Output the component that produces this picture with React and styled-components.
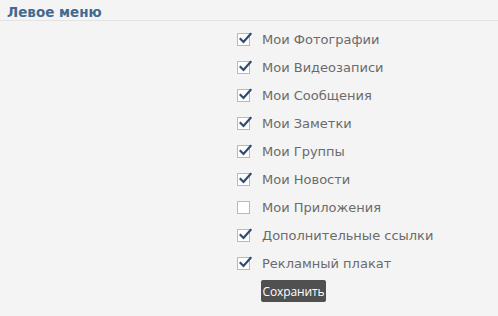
import React from "react";
import styled, { createGlobalStyle } from "styled-components";

const Global = createGlobalStyle`
  html, body { margin: 0; padding: 0; background: #f4f4f4; }
  body { font-family: "DejaVu Sans", sans-serif; }
`;

const Page = styled.div`
  width: 498px;
  height: 316px;
  background: #f4f4f4;
`;

const Header = styled.div`
  height: 21px;
  box-sizing: border-box;
  padding: 5px 0 0 7px;
  border-bottom: 1px solid #e3e3e3;
  font-family: "DejaVu Sans", sans-serif;
  font-weight: bold;
  font-size: 13.5px;
  color: #45688e;
  line-height: 15px;
`;

const List = styled.div`
  display: flex;
  flex-direction: column;
  padding: 4px 0 0 237px;
`;

const Row = styled.label`
  display: flex;
  align-items: center;
  height: 28px;
`;

const Box = styled.span`
  position: relative;
  width: 13px;
  height: 13px;
  box-sizing: border-box;
  border: 1px solid #b9b9b9;
  background: #fff;
  flex: none;
`;

const Check = styled.svg`
  position: absolute;
  left: 1px;
  top: -2px;
`;

const Label = styled.span`
  margin-left: 12px;
  font-family: "DejaVu Sans", sans-serif;
  font-size: 13px;
  color: #6b6b6b;
  line-height: 15px;
`;

const Button = styled.button`
  margin: 3px 0 0 24px;
  align-self: flex-start;
  width: 65px;
  height: 22px;
  border: none;
  border-radius: 2px;
  background: #505050;
  color: #fff;
  font-family: "Open Sans", sans-serif;
  font-size: 12px;
  letter-spacing: -0.1px;
  padding: 0;
`;

const items = [
  ["Мои Фотографии", true],
  ["Мои Видеозаписи", true],
  ["Мои Сообщения", true],
  ["Мои Заметки", true],
  ["Мои Группы", true],
  ["Мои Новости", true],
  ["Мои Приложения", false],
  ["Дополнительные ссылки", true],
  ["Рекламный плакат", true],
];

function CheckMark() {
  return (
    <Check width="13" height="13" viewBox="0 0 13 13">
      <path d="M1.5 7 L4.5 10 L11.5 2" fill="none" stroke="#2d4b70" strokeWidth="2.2" strokeLinecap="square" />
    </Check>
  );
}

export default function App() {
  return (
    <Page>
      <Global />
      <Header>Левое меню</Header>
      <List>
        {items.map(([t, c]) => (
          <Row key={t}>
            <Box>{c && <CheckMark />}</Box>
            <Label>{t}</Label>
          </Row>
        ))}
        <Button>Сохранить</Button>
      </List>
    </Page>
  );
}
